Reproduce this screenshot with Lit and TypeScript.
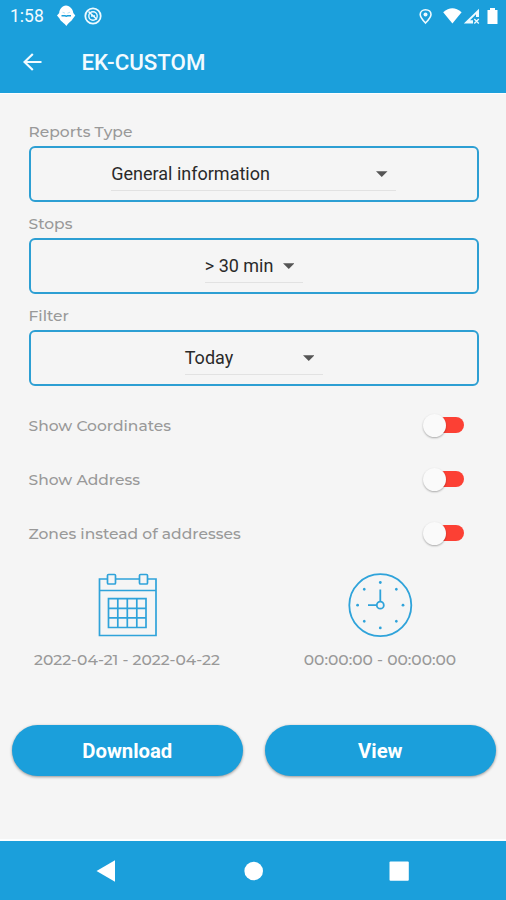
import { LitElement, html, css, svg } from "lit";
import { customElement, property } from "lit/decorators.js";

@customElement("select-field")
class SelectField extends LitElement {
  @property() label = "";
  @property() value = "";
  @property() size = "wide";

  static styles = css`
    :host { display: block; height: 92.2px; }
    .label { height: 29px; line-height: 30px; font-size: 15.5px; font-weight: 500; color: #999; }
    .box {
      height: 56px; box-sizing: border-box; border: 2px solid #2d9fd3; border-radius: 6px;
      display: flex; justify-content: center; padding-top: 8px;
    }
    .inner {
      display: flex; align-items: center; justify-content: space-between;
      height: 35px; border-bottom: 1px solid #e2e2e2; box-sizing: border-box;
      font: 18px Roboto, sans-serif; color: #2a2a2a; padding: 1px 8.5px 0 0;
    }
    .wide { width: 285px; }
    .small { width: 98px; }
    .medium { width: 138px; }
    .arrow { width: 11.5px; height: 6px; }
  `;

  render() {
    return html`
      <div class="label">${this.label}</div>
      <div class="box">
        <div class="inner ${this.size}">
          <span>${this.value}</span>
          <svg class="arrow" viewBox="0 0 12 6"><path d="M0 0H12L6 6Z" fill="#555" /></svg>
        </div>
      </div>`;
  }
}

@customElement("toggle-row")
class ToggleRow extends LitElement {
  @property() label = "";

  static styles = css`
    :host {
      display: flex; align-items: center; justify-content: space-between;
      height: 54px; padding-right: 15px; font-size: 15.5px; font-weight: 500; color: #999;
    }
    .switch { width: 41px; height: 23px; display: flex; align-items: center; }
    .thumb {
      width: 23px; height: 23px; border-radius: 50%; background: #fafafa; z-index: 1;
      box-shadow: 0 1px 2px rgba(0, 0, 0, 0.3);
    }
    .track { width: 30px; height: 16px; margin-left: -12px; border-radius: 8px; background: #fc4034; }
  `;

  render() {
    return html`<span>${this.label}</span>
      <div class="switch"><div class="thumb"></div><div class="track"></div></div>`;
  }
}

const ticks = [0, 45, 90, 135, 180, 225, 270, 315];

@customElement("app-root")
class AppRoot extends LitElement {
  static styles = css`
    :host {
      display: flex; flex-direction: column; width: 506px; height: 900px; overflow: hidden;
      background: #f5f5f5; font-family: Montserrat, Inter, sans-serif;
    }
    .top { height: 94px; background: #1b9fdb; color: #f2fbff; border-bottom: 1.5px solid #fcfeff; box-sizing: border-box; }
    .status { height: 31px; display: flex; align-items: center; justify-content: space-between; }
    .status svg { display: block; }
    .clock-text { display: flex; align-items: center; font: 17.5px Roboto, sans-serif; padding-left: 10px; }
    .notices { margin-left: 12.5px; }
    .bar { height: 62px; display: flex; align-items: center; }
    .back { margin-left: 23px; }
    .title { margin-left: 39.5px; font: 500 22.3px Roboto, sans-serif; }
    .form { padding: 23px 27px 0 28.5px; height: 281px; box-sizing: content-box; }
    .toggles { padding: 0 27px 0 28.5px; }
    .range { display: grid; grid-template-columns: 254px 252px; justify-items: center; padding-top: 12px; }
    .cell { display: flex; flex-direction: column; align-items: center; color: #999; font-size: 15.5px; font-weight: 500; }
    .cell svg { display: block; width: 66px; height: 66px; }
    .cell span { margin-top: 11px; line-height: 22px; white-space: nowrap; }
    .buttons { display: flex; justify-content: space-between; padding: 54px 10.5px 0 12px; }
    .button {
      width: 230.5px; height: 51px; border: 0; border-radius: 26px; background: #1b9fdb; color: #fff;
      font: 700 20.3px Roboto, sans-serif; box-shadow: 0 1px 3px rgba(0, 0, 0, 0.4);
    }
    .nav { margin-top: auto; height: 59px; background: #1b9fdb; border-top: 2px solid #fcfeff; }
    .nav svg { display: block; }
  `;

  render() {
    return html`
      <div class="top">
        <div class="status">
          <div class="clock-text">
            1:58
            <svg class="notices" width="48" height="22" viewBox="56 4 48 22">
              <path d="M66 4.5C70 5 73 8 73.3 12L75.3 14.5L73 17.5C71.5 20.5 68.5 21.5 66.3 25C64 21.5 60.5 20.5 59.5 17.5L57 14.5L59.2 12C59.5 8 62 5 66 4.5Z" fill="#fff" />
              <path d="M61.5 14.7H65L66.3 15.2L67.5 14.7H71" fill="none" stroke="#1b9fdb" stroke-width="1.5" />
              <path d="M62.5 11.2L65 12.2M70 11.2L67.5 12.2" stroke="#9bd5ef" stroke-width=".7" />
              <circle cx="93" cy="15" r="7.7" fill="none" stroke="#eefaff" stroke-width="1.8" />
              <circle cx="93" cy="15" r="4.2" fill="none" stroke="#eefaff" stroke-width="1.4" />
              <path d="M88.5 10.5L97 18.5M91 15H95" stroke="#eefaff" stroke-width="1.6" />
            </svg>
          </div>
          <svg width="87" height="24" viewBox="419 3 87 24">
            <path d="M425.5 8.8C429 8.8 431 11 431 13.5C431 16.5 425.5 22 425.5 22S420.2 16.5 420.2 13.5C420.2 11 422.2 8.8 425.5 8.8Z" fill="none" stroke="#eefaff" stroke-width="1.6" />
            <circle cx="425.5" cy="13.5" r="2" fill="#eefaff" />
            <path d="M443.2 11.2Q452.3 3.5 461.6 11.2L452.4 22.6Z" fill="#fff" />
            <path d="M463.8 22.5L479 7.8V16H476V13.2L470 19.2H473V22.5Z" fill="#eefaff" />
            <path d="M474.3 18L478.8 22.5M478.8 18L474.3 22.5" stroke="#eefaff" stroke-width="1.3" />
            <path d="M487.5 9H490V7H495V9H497.5V23H487.5Z" fill="#fff" />
          </svg>
        </div>
        <div class="bar">
          <svg class="back" width="19" height="18" viewBox="0 0 19 18">
            <path d="M18.5 9H1.8M9.8 1L1.5 9L9.8 17" fill="none" stroke="#f2fbff" stroke-width="2.2" />
          </svg>
          <div class="title">EK-CUSTOM</div>
        </div>
      </div>
      <div class="form">
        <select-field label="Reports Type" value="General information" size="wide"></select-field>
        <select-field label="Stops" value="&gt; 30 min" size="small"></select-field>
        <select-field label="Filter" value="Today" size="medium"></select-field>
      </div>
      <div class="toggles">
        <toggle-row label="Show Coordinates"></toggle-row>
        <toggle-row label="Show Address"></toggle-row>
        <toggle-row label="Zones instead of addresses"></toggle-row>
      </div>
      <div class="range">
        <div class="cell">
          <svg viewBox="94 571.5 66 66" fill="none" stroke="#2fa3da" stroke-width="1.7">
            <path d="M107.5 578.5H99.5V635H156V578.5H147.5M115.5 578.5H139.5M99.5 590H156" />
            <rect x="107.5" y="574" width="8" height="9.5" rx="1" />
            <rect x="139.5" y="574" width="8" height="9.5" rx="1" />
            <path d="M108.5 598.2H146V627H108.5ZM108.5 607.8H146M108.5 617.3H146M117.8 598.2V627M127.3 598.2V627M136.8 598.2V627" />
          </svg>
          <span>2022-04-21 - 2022-04-22</span>
        </div>
        <div class="cell">
          <svg viewBox="347 571.5 66 66" fill="none" stroke="#2fa3da" stroke-width="1.8">
            <circle cx="380.3" cy="604.7" r="31" />
            <circle cx="380.3" cy="604.7" r="3.5" />
            <path d="M380.3 589V601.2M368 604.7H376.8" />
            ${ticks.map((a) => svg`<circle cx="380.3" cy="582" r="1.4" fill="#2fa3da" stroke="none" transform="rotate(${a} 380.3 604.7)" />`)}
          </svg>
          <span>00:00:00 - 00:00:00</span>
        </div>
      </div>
      <div class="buttons">
        <button class="button">Download</button>
        <button class="button">View</button>
      </div>
      <div class="nav">
        <svg width="506" height="59" viewBox="0 841 506 59" fill="#fff">
          <path d="M96.5 871L115 860.3V881.7Z" />
          <circle cx="253.7" cy="871" r="9.3" />
          <rect x="389.5" y="861.5" width="19.3" height="19.3" rx="1" />
        </svg>
      </div>`;
  }
}
